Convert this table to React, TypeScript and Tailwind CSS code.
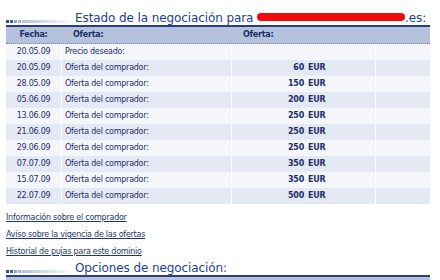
const rows = [
  { date: "20.05.09", label: "Precio deseado:", amount: "" },
  { date: "20.05.09", label: "Oferta del comprador:", amount: "60" },
  { date: "28.05.09", label: "Oferta del comprador:", amount: "150" },
  { date: "05.06.09", label: "Oferta del comprador:", amount: "200" },
  { date: "13.06.09", label: "Oferta del comprador:", amount: "250" },
  { date: "21.06.09", label: "Oferta del comprador:", amount: "250" },
  { date: "29.06.09", label: "Oferta del comprador:", amount: "250" },
  { date: "07.07.09", label: "Oferta del comprador:", amount: "350" },
  { date: "15.07.09", label: "Oferta del comprador:", amount: "350" },
  { date: "22.07.09", label: "Oferta del comprador:", amount: "500" },
];

function SectionTitle({ children }: { children: React.ReactNode }) {
  return (
    <div className="flex h-[19px] items-end border-b-2 border-[#2b3d7c]">
      {/* little squares + fading bar */}
      <div className="mb-[2px] flex h-[3px] w-[69px] shrink-0 items-stretch gap-px">
        <span className="w-[3px] bg-[#2d4f9e]" />
        <span className="w-[3px] bg-[#3d5fa8]" />
        <span className="w-[3px] bg-[#8fa3cf]" />
        <span className="w-[3px] bg-[#9fb0d6]" />
        <span className="flex-1 bg-gradient-to-r from-[#b3c1de] to-white" />
      </div>
      <h2 className="text-[12px] leading-[14px] tracking-[-0.1px] text-[#1b3f94] whitespace-nowrap">
        {children}
      </h2>
    </div>
  );
}

export default function App() {
  return (
    <div className="h-[280px] w-[440px] overflow-hidden bg-white pl-[6px] pr-[10px] pt-[8px] font-['DejaVu_Sans',sans-serif] text-[#1d2f6c]">
      <SectionTitle>
        Estado de la negociación para{" "}
        <span className="relative inline-block w-[148px] align-middle">
          <span className="block h-[8px] -translate-y-[2px] rounded-full bg-[#f00c0c]" />
        </span>
        .es:
      </SectionTitle>

      <div className="text-[8px] tracking-[-0.25px]">
        <div className="grid h-[17px] grid-cols-[55px_169px_143px_1fr] gap-x-px border-b border-dotted border-[#7f8aa8] bg-[#b5c2dd] font-bold text-[#1a2d66]">
          <div className="flex items-center justify-center">Fecha:</div>
          <div className="flex items-center pl-[11px]">Oferta:</div>
          <div className="flex items-center pl-[11px]">Oferta:</div>
          <div />
        </div>
        {rows.map((r, i) => {
          const bg = i % 2 === 0 ? "bg-[#f4f6fb]" : "bg-[#e4e9f3]";
          return (
            <div key={i} className="grid h-[16px] grid-cols-[55px_169px_143px_1fr] gap-x-px bg-white">
              <div className={`flex items-center justify-center ${bg}`}>{r.date}</div>
              <div className={`flex items-center pl-[3px] ${bg}`}>{r.label}</div>
              <div className={`flex items-center font-bold ${bg}`}>
                {r.amount && (
                  <>
                    <span className="w-[72px] text-right">{r.amount}</span>
                    <span className="ml-[4px]">EUR</span>
                  </>
                )}
              </div>
              <div className={bg} />
            </div>
          );
        })}
      </div>

      <div className="mt-[8px] flex flex-col items-start gap-[6px] text-[8px] leading-[11px] tracking-[-0.25px] text-[#23386f]">
        <a href="#" className="underline">Información sobre el comprador</a>
        <a href="#" className="underline">Aviso sobre la vigencia de las ofertas</a>
        <a href="#" className="underline">Historial de pujas para este dominio</a>
      </div>

      <div className="mt-[1px]">
        <SectionTitle>Opciones de negociación:</SectionTitle>
        <div className="h-[6px] bg-[#b5c2dd]" />
      </div>
    </div>
  );
}
